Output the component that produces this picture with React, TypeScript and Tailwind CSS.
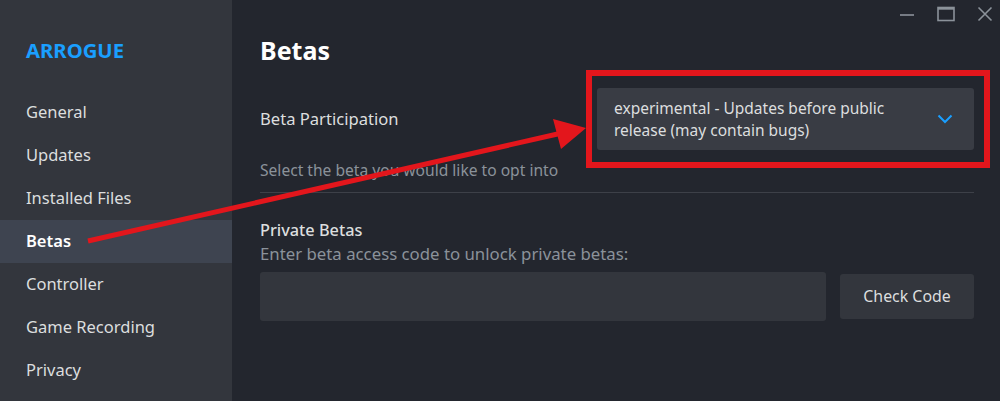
const navItems = ['General', 'Updates', 'Installed Files', 'Betas', 'Controller', 'Game Recording', 'Privacy']

export default function App() {
  return (
    <div
      className="relative flex h-[401px] w-[1000px] overflow-hidden bg-[#23262e] text-[#dcdedf]"
      style={{ fontFamily: '"Noto Sans", "Open Sans", sans-serif' }}
    >
      {/* Sidebar */}
      <aside className="flex w-[232px] shrink-0 flex-col bg-[#33363d]">
        <div className="px-[26px] pt-[37px] text-[20.3px] font-bold leading-[26px] text-[#1a9fff]">ARROGUE</div>
        <nav className="mt-[28px] flex flex-col">
          {navItems.map((item) => (
            <div
              key={item}
              className={
                item === 'Betas'
                  ? 'flex h-[43px] items-center bg-[#3e4450] px-[26px] text-[16.5px] font-semibold text-white'
                  : 'flex h-[43px] items-center px-[26px] text-[16.5px] text-[#dcdedf]'
              }
            >
              {item}
            </div>
          ))}
        </nav>
      </aside>

      {/* Main */}
      <main className="relative flex-1 pl-[28px] pr-[26px]">
        {/* Window controls */}
        <div className="absolute right-[7px] top-[6px] flex items-start gap-[22px] text-[#8b929a]">
          <svg width="16" height="16" viewBox="0 0 16 16">
            <line x1="1" y1="9" x2="15" y2="9" stroke="currentColor" strokeWidth="1.6" />
          </svg>
          <svg width="18" height="16" viewBox="0 0 18 16" fill="none">
            <rect x="1" y="1.5" width="16" height="13" stroke="currentColor" strokeWidth="1.6" />
            <line x1="1" y1="2.5" x2="17" y2="2.5" stroke="currentColor" strokeWidth="2.4" />
          </svg>
          <svg width="16" height="16" viewBox="0 0 16 16">
            <path d="M1.5 1.5 L14.5 14.5 M14.5 1.5 L1.5 14.5" stroke="currentColor" strokeWidth="1.6" />
          </svg>
        </div>

        <h1 className="pt-[34px] text-[25px] font-bold leading-8 text-white">Betas</h1>

        <div className="mt-[22px] flex items-center justify-between">
          <div className="text-[16.6px]">Beta Participation</div>
          <div className="flex h-[62px] w-[377px] items-center justify-between rounded-[3px] bg-[#393c44] pl-[17px] pr-[21px]">
            <div className="text-[15.5px] leading-[22px] text-[#dcdedf]">
              experimental - Updates before public
              <br />
              release (may contain bugs)
            </div>
            <svg width="16" height="10" viewBox="0 0 16 10" fill="none">
              <path d="M1.5 1.5 L8 8 L14.5 1.5" stroke="#1a9fff" strokeWidth="2" />
            </svg>
          </div>
        </div>

        <div className="mt-[9px] text-[15.6px] leading-[22px] text-[#8b929a]">Select the beta you would like to opt into</div>
        <div className="mt-[11px] h-px bg-[#3d4048]" />

        <div className="mt-[26px] text-[16.3px] font-medium leading-[22px] text-[#dcdedf]">Private Betas</div>
        <div className="mt-[2px] text-[16.8px] leading-[22px] text-[#8b929a]">
          Enter beta access code to unlock private betas:
        </div>

        <div className="mt-[7px] flex items-center gap-[14px]">
          <div className="h-[49px] flex-1 rounded-[3px] bg-[#33363d]" />
          <button className="flex h-[45px] w-[134px] items-center justify-center rounded-[3px] bg-[#33363d] text-[15.9px] text-[#dcdedf]">
            Check Code
          </button>
        </div>
      </main>

      {/* Annotation overlay */}
      <svg className="pointer-events-none absolute left-0 top-0" width="1000" height="401" viewBox="0 0 1000 401">
        <rect x="589" y="73" width="398" height="92" fill="none" stroke="#e3161c" strokeWidth="6" />
        <line x1="88" y1="241" x2="562" y2="133" stroke="#e3161c" strokeWidth="5" />
        <polygon points="553,119 586,128 561,149" fill="#e3161c" />
      </svg>
    </div>
  )
}
